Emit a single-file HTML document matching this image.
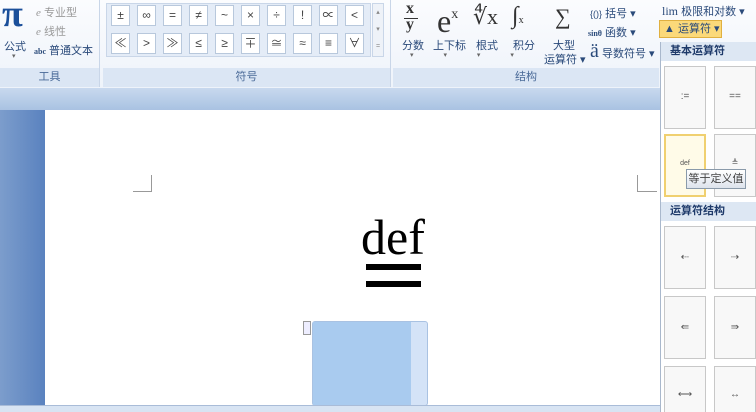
<!DOCTYPE html>
<html><head><meta charset="utf-8"><style>
*{margin:0;padding:0;box-sizing:border-box}
html,body{width:756px;height:412px;overflow:hidden}
body{position:relative;background:#fff;font-family:"Liberation Sans","Noto Sans CJK SC",sans-serif;font-size:11px;color:#333}
.a{position:absolute}
.ribbon{left:0;top:0;width:756px;height:88px;background:linear-gradient(#fbfcfe,#eef3fa)}
.lbl{top:68px;height:19px;background:#dbe6f4;color:#4a6a98;text-align:center;font-size:11px;line-height:19px}
.sym{width:19px;height:21px;border:1px solid #b8c8dc;background:#fff;text-align:center;line-height:19px;font-size:12px;color:#444}
.cn{color:#2a4a7a;font-size:11px;white-space:nowrap}
.btn{width:42px;background:#f8f8f8;border:1px solid #c8c8c8;text-align:center;font-size:10px;color:#555}
</style></head><body>
<div class="a ribbon"></div>
<div class="a" style="left:0;top:0;width:100px;height:87px;border-right:1px solid #c9d6e8"></div>
<div class="a" style="left:2px;top:-6px;font:bold 38px 'Liberation Serif',serif;color:#1b4f9a;line-height:40px">π</div>
<div class="a cn" style="left:4px;top:38px">公式</div>
<div class="a" style="left:12px;top:52px;font-size:7px;color:#666">▾</div>
<div class="a" style="left:36px;top:4px;color:#999;font-size:11px"><i style="font-family:'Liberation Serif'">e</i> 专业型</div>
<div class="a" style="left:36px;top:23px;color:#999;font-size:11px"><i style="font-family:'Liberation Serif'">e</i> 线性</div>
<div class="a cn" style="left:34px;top:42px"><b style="font:bold 8px 'Liberation Serif'">abc</b> 普通文本</div>
<div class="a lbl" style="left:0;width:99px">工具</div>
<div class="a" style="left:102px;top:0;width:289px;height:87px;border-right:1px solid #c9d6e8"></div>
<div class="a" style="left:106px;top:3px;width:265px;height:54px;background:#e4ecf7;border:1px solid #c9d6e8"></div>
<div class="a" style="left:372px;top:3px;width:12px;height:54px;background:#eef2f8;border:1px solid #c9d6e8;font-size:7px;color:#888;text-align:center;line-height:17px">▴<br>▾<br>=</div>
<div class="a lbl" style="left:103px;width:287px">符号</div>
<!-- structures -->
<div class="a" style="left:406px;top:1px;font:bold 16px 'Liberation Serif',serif;color:#333;line-height:16px">x</div>
<div class="a" style="left:404px;top:18px;width:14px;height:1px;background:#333"></div>
<div class="a" style="left:406px;top:17px;font:bold 16px 'Liberation Serif',serif;color:#333;line-height:16px">y</div>
<div class="a" style="left:437px;top:-2px;font:32px 'Liberation Serif',serif;color:#333;line-height:34px">e<span style="font-size:14px;vertical-align:14px">x</span></div>
<div class="a" style="left:473px;top:4px;font:22px 'Liberation Serif',serif;color:#333;line-height:26px">∜x</div>
<div class="a" style="left:512px;top:2px;font:24px 'Liberation Serif',serif;color:#333;line-height:28px">∫<span style="font-size:10px">x</span></div>
<div class="a" style="left:555px;top:4px;font:22px 'Liberation Serif',serif;color:#333;line-height:26px">∑</div>
<div class="a cn" style="left:402px;top:37px">分数</div>
<div class="a cn" style="left:433px;top:37px">上下标</div>
<div class="a cn" style="left:476px;top:37px">根式</div>
<div class="a cn" style="left:513px;top:37px">积分</div>
<div class="a cn" style="left:553px;top:37px">大型</div>
<div class="a cn" style="left:544px;top:51px">运算符 ▾</div>
<div class="a" style="left:410px;top:51px;font-size:7px;color:#666;word-spacing:28px">▾ ▾ ▾ ▾</div>
<div class="a cn" style="left:590px;top:5px"><span style="font-size:9px">{()}</span> 括号 ▾</div>
<div class="a cn" style="left:588px;top:24px"><b style="font:bold 8px 'Liberation Serif'">sinθ</b> 函数 ▾</div>
<div class="a cn" style="left:590px;top:40px"><span style="font:20px 'Liberation Serif'">ä</span> 导数符号 ▾</div>
<div class="a cn" style="left:662px;top:3px"><span style="font:12px 'Liberation Serif'">lim</span> 极限和对数 ▾</div>
<div class="a cn" style="left:659px;top:20px;width:63px;height:18px;background:#fbd97a;border:1px solid #e0b040;line-height:16px;padding-left:4px">▲ 运算符 ▾</div>
<div class="a lbl" style="left:393px;width:266px">结构</div>
<div class="a" style="left:0;top:88px;width:660px;height:22px;background:linear-gradient(#c8d9ee,#a9c2e2)"></div>
<div class="a" style="left:0;top:110px;width:45px;height:296px;background:linear-gradient(90deg,#7c9dcc,#5a82bf)"></div>
<div class="a" style="left:45px;top:110px;width:615px;height:296px;background:#fff"></div>
<div class="a" style="left:133px;top:191px;width:19px;height:1px;background:#999"></div>
<div class="a" style="left:151px;top:175px;width:1px;height:17px;background:#999"></div>
<div class="a" style="left:637px;top:191px;width:20px;height:1px;background:#999"></div>
<div class="a" style="left:637px;top:175px;width:1px;height:17px;background:#999"></div>
<div class="a" style="left:361px;top:212px;font:50px 'Liberation Serif',serif;color:#000;line-height:50px">def</div>
<div class="a" style="left:366px;top:264px;width:55px;height:6px;background:#000"></div>
<div class="a" style="left:366px;top:281px;width:55px;height:6px;background:#000"></div>
<div class="a" style="left:312px;top:321px;width:116px;height:85px;background:#d4e3f7;border:1px solid #a9c2e2;border-radius:3px"></div>
<div class="a" style="left:313px;top:322px;width:98px;height:84px;background:#a9cbef"></div>
<div class="a" style="left:303px;top:321px;width:8px;height:14px;background:#eef;border:1px solid #999"></div>
<div class="a" style="left:0;top:405px;width:756px;height:7px;background:#d8e4f3;border-top:1px solid #a9bcd8"></div>
<div class="a" style="left:660px;top:42px;width:96px;height:370px;background:#fff;border-left:1px solid #a9b8cc"></div>
<div class="a" style="left:661px;top:42px;width:95px;height:19px;background:#dde7f3;color:#1e3a6a;font-weight:bold;font-size:11px;line-height:19px;padding-left:9px">基本运算符</div>
<div class="a" style="left:661px;top:202px;width:95px;height:19px;background:#dde7f3;color:#1e3a6a;font-weight:bold;font-size:11px;line-height:19px;padding-left:9px">运算符结构</div>
<div class="a btn" style="left:664px;top:66px;height:63px;line-height:60px">:=</div>
<div class="a btn" style="left:714px;top:66px;height:63px;line-height:60px">==</div>
<div class="a btn" style="left:664px;top:134px;height:63px;line-height:56px;border:2px solid #f0d070;background:#fffbe8;font-size:7px">def</div>
<div class="a btn" style="left:714px;top:134px;height:63px;line-height:56px;font-size:8px">≜</div>
<div class="a btn" style="left:664px;top:226px;height:63px;line-height:62px">⇠</div>
<div class="a btn" style="left:714px;top:226px;height:63px;line-height:62px">⇢</div>
<div class="a btn" style="left:664px;top:296px;height:63px;line-height:62px">⇚</div>
<div class="a btn" style="left:714px;top:296px;height:63px;line-height:62px">⇛</div>
<div class="a btn" style="left:664px;top:366px;height:50px;line-height:56px">⟷</div>
<div class="a btn" style="left:714px;top:366px;height:50px;line-height:56px">↔</div>
<div class="a" style="left:686px;top:169px;width:60px;height:20px;background:linear-gradient(#fff,#dde3ec);border:1px solid #8a9aaa;font-size:11px;line-height:18px;text-align:center;color:#444">等于定义值</div>
<div id="g"></div>
<script>
var s=["±","∞","=","≠","~","×","÷","!","∝","<","≪",">","≫","≤","≥","∓","≅","≈","≡","∀"],h="";
for(var i=0;i<20;i++){var c=i%10,r=i>9?1:0;h+='<div class="a sym" style="left:'+(111+c*26)+'px;top:'+(5+r*28)+'px">'+s[i]+'</div>';}
document.getElementById("g").innerHTML=h;
</script>
</body></html>
